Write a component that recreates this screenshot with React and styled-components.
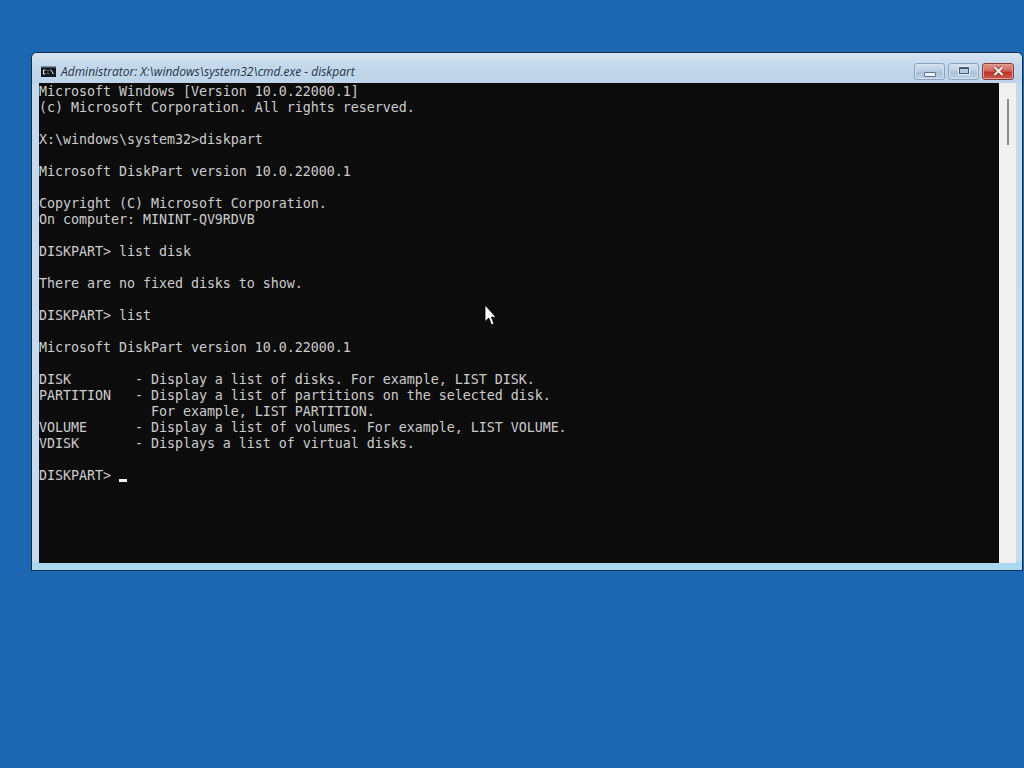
import React from "react";
import styled, { createGlobalStyle } from "styled-components";

const Global = createGlobalStyle`
  html, body { margin: 0; padding: 0; height: 100%; background: #1c66b2; overflow: hidden; }
  #root { height: 100%; }
`;

const Desktop = styled.div`
  position: relative;
  width: 1024px;
  height: 768px;
  padding: 52px 1px 0 31px;
  box-sizing: border-box;
  background: #1c66b2;
`;

const Window = styled.div`
  width: 992px;
  height: 519px;
  box-sizing: border-box;
  display: flex;
  flex-direction: column;
  border: 1px solid #1b3048;
  border-bottom-color: #12304f;
  border-radius: 6px 6px 0 0;
  background: linear-gradient(180deg, #c6d9ea 0, #c9dced calc(100% - 10px), #a9d8ef calc(100% - 7px), #a9d8ef 100%);
`;

const TitleBar = styled.div`
  height: 30px;
  flex: none;
  display: flex;
  align-items: center;
  padding: 7px 8px 0 9px;
  box-sizing: border-box;
  background: linear-gradient(180deg, #d6e4f1 0%, #c3d8ea 45%, #bdd3e8 100%);
  border-radius: 5px 5px 0 0;
`;

const AppIcon = styled.svg`
  width: 15px;
  height: 11px;
  flex: none;
  margin-right: 5px;
`;

const Title = styled.div`
  flex: 1;
  font: italic 12px "Open Sans", "Noto Sans", sans-serif;
  color: #26324a;
  white-space: nowrap;
`;

const Controls = styled.div`
  display: flex;
  gap: 3px;
  margin-top: -1px;
`;

const ControlButton = styled.div`
  width: ${(p) => p.$w}px;
  height: 17px;
  box-sizing: border-box;
  display: flex;
  align-items: center;
  justify-content: center;
  border: 1px solid ${(p) => (p.$close ? "#8a3a34" : "#8ba3bd")};
  border-radius: 3px;
  box-shadow: inset 0 0 0 1px ${(p) => (p.$close ? "#e0a096" : "#d3e1ee")};
  background: ${(p) =>
    p.$close
      ? "linear-gradient(180deg, #e2958b 0%, #d2675c 45%, #b9352c 55%, #cb5d4f 100%)"
      : "linear-gradient(180deg, #d3e0ed 0%, #bdd0e3 45%, #a9c0d8 55%, #bcd1e6 100%)"};
`;

const MinGlyph = styled.div`
  width: 10px;
  height: 3px;
  margin-top: 7px;
  box-sizing: content-box;
  background: #eef4fa;
  border: 1px solid #5d7088;
  border-radius: 1px;
`;

const MaxGlyph = styled.div`
  width: 8px;
  height: 4px;
  margin-top: -2px;
  border: 1px solid #46586f;
  border-top-width: 2px;
  outline: 1px solid #e6eef6;
  background: #b7cbe0;
`;

const Client = styled.div`
  flex: 1;
  min-height: 0;
  display: flex;
  margin: 0 6px 7px 7px;
`;

const Console = styled.pre`
  margin: 0;
  padding-top: 1px;
  width: 960px;
  height: 480px;
  box-sizing: border-box;
  flex: none;
  background: #0c0c0c;
  color: #cccccc;
  font: 13.33px/16px "DejaVu Sans Mono", "Liberation Mono", monospace;
  letter-spacing: -0.03px;
  overflow: hidden;
`;

const Caret = styled.span`
  display: inline-block;
  width: 8px;
  height: 3px;
  background: #f2f2f2;
  vertical-align: -2px;
`;

const ScrollBar = styled.div`
  width: 17px;
  height: 480px;
  flex: none;
  box-sizing: border-box;
  padding: 16px 0 0 8px;
  background: #f0f0f0;
`;

const Thumb = styled.div`
  width: 2px;
  height: 46px;
  background: #8b8b8b;
`;

const Pointer = styled.svg`
  position: absolute;
  left: 484px;
  top: 304px;
  width: 13px;
  height: 23px;
`;

const text = `Microsoft Windows [Version 10.0.22000.1]
(c) Microsoft Corporation. All rights reserved.

X:\\windows\\system32>diskpart

Microsoft DiskPart version 10.0.22000.1

Copyright (C) Microsoft Corporation.
On computer: MININT-QV9RDVB

DISKPART> list disk

There are no fixed disks to show.

DISKPART> list

Microsoft DiskPart version 10.0.22000.1

DISK        - Display a list of disks. For example, LIST DISK.
PARTITION   - Display a list of partitions on the selected disk.
              For example, LIST PARTITION.
VOLUME      - Display a list of volumes. For example, LIST VOLUME.
VDISK       - Displays a list of virtual disks.

DISKPART> `;

export default function App() {
  return (
    <>
      <Global />
      <Desktop>
        <Window>
          <TitleBar>
            <AppIcon viewBox="0 0 15 11">
              <rect x="0" y="0" width="15" height="11" fill="#12161e" />
              <rect x="0" y="0" width="15" height="1.5" fill="#7f8a9a" />
              <path d="M2.5 4H4.5M2.5 4V8H4.5M6.5 4.5H7.5M6.5 7.5H7.5M9.5 3.5L12.5 8" stroke="#f2f2f2" strokeWidth="1" fill="none" />
            </AppIcon>
            <Title>Administrator: X:\windows\system32\cmd.exe - diskpart</Title>
            <Controls>
              <ControlButton $w={31}><MinGlyph /></ControlButton>
              <ControlButton $w={31}><MaxGlyph /></ControlButton>
              <ControlButton $w={32} $close>
                <svg width="13" height="10" viewBox="0 0 13 10">
                  <path d="M2.5 1L10.5 9M10.5 1L2.5 9" stroke="#6b2620" strokeWidth="3.6" />
                  <path d="M2.5 1L10.5 9M10.5 1L2.5 9" stroke="#f4ece6" strokeWidth="2.4" />
                </svg>
              </ControlButton>
            </Controls>
          </TitleBar>
          <Client>
            <Console>{text}<Caret /></Console>
            <ScrollBar><Thumb /></ScrollBar>
          </Client>
        </Window>
        <Pointer viewBox="0 0 13 23">
          <path d="M1 1V17.5L4.8 14L7.4 20.8L10 19.7L7.4 13.2H12Z" fill="#fff" stroke="#000" strokeWidth="0.8" />
        </Pointer>
      </Desktop>
    </>
  );
}
